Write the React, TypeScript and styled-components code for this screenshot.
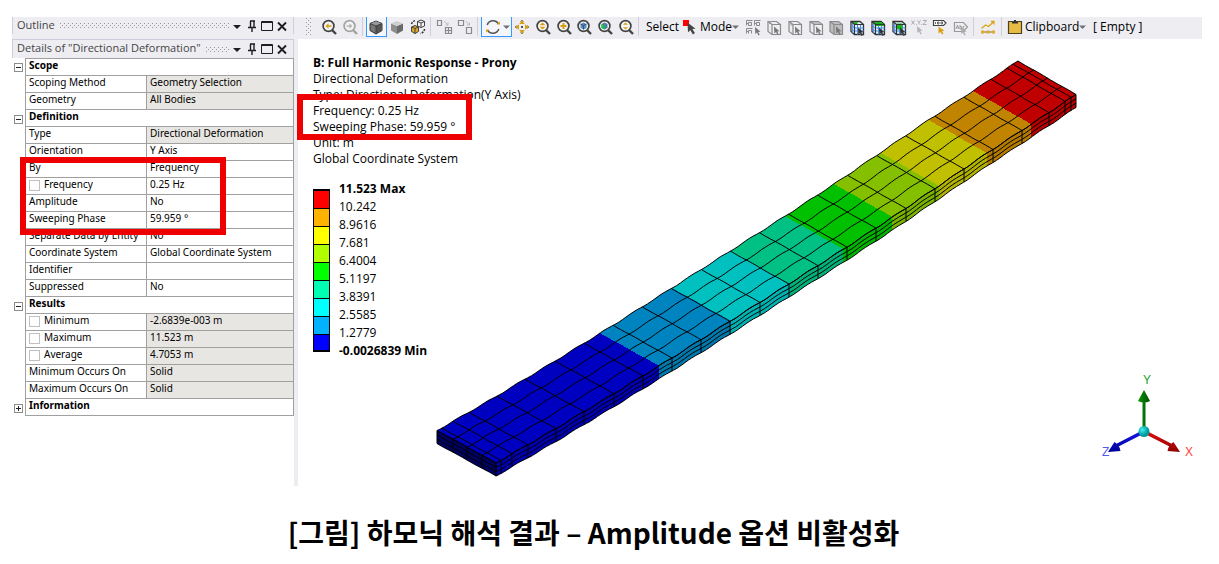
import React from "react";
import styled, { createGlobalStyle } from "styled-components";

const GlobalStyle = createGlobalStyle`
  * { box-sizing: border-box; }
  body {
    margin: 0;
    background: #ffffff;
    color: #000000;
    font-family: "Noto Sans", "Open Sans", sans-serif;
  }
  button { font: inherit; color: inherit; background: none; border: 0; padding: 0; }
`;

const chrome = "#eeeef2";
const line = "#a0a0a0";

const Page = styled.figure`
  margin: 0;
  padding: 17px 17px 12px 12px;
`;

const Workspace = styled.div`
  display: grid;
  grid-template-columns: 282px minmax(0, 1fr);
  column-gap: 4px;
  background: ${chrome};
`;

const Caption = styled.figcaption`
  padding: 28px 27px 0 0;
  text-align: center;
  font-family: "Noto Sans CJK KR", sans-serif;
  font-size: 28px;
  line-height: 36px;
  font-weight: 700;
`;

/* ---------- side panel ---------- */

const SidePanel = styled.aside`
  position: relative;
  background: #ffffff;
`;

const OutlineSlot = styled.div`
  padding-bottom: 5px;
  background: ${chrome};
`;

const PanelBar = styled.header<{ $topLine?: boolean }>`
  display: flex;
  align-items: center;
  height: ${(p) => (p.$topLine ? 19 : 17)}px;
  padding: 0 5px 0 4px;
  background: ${chrome};
  border: solid #cccedb;
  border-width: ${(p) => (p.$topLine ? "1px 1px 0" : "0 1px")};
`;

const PanelTitle = styled.h2`
  margin: 0 5px 2px 0;
  font-family: "Open Sans", sans-serif;
  font-size: 11px;
  line-height: 16px;
  font-weight: 400;
  color: #444444;
  white-space: nowrap;
`;

const DotsSvg = styled.svg`
  flex: 1;
  min-width: 0;
  height: 5px;
`;

const PanelActions = styled.div`
  display: flex;
  gap: 3px;
  margin-left: 2px;
`;

const PanelButton = styled.button`
  display: block;
  width: 12px;
  height: 14px;
  svg { display: block; }
`;

const PropertyTable = styled.table`
  width: 100%;
  table-layout: fixed;
  border-collapse: separate;
  border-spacing: 0;
  font-size: 10px;
  line-height: 12px;
`;

const Cell = styled.td<{ $muted?: boolean }>`
  height: 17px;
  padding: 0 0 4px 3px;
  text-align: left;
  font-weight: 400;
  white-space: nowrap;
  border: solid ${line};
  border-width: 0 1px 1px 0;
  background: ${(p) => (p.$muted ? "#e8e6e2" : "#ffffff")};
  tr:first-child > & { border-top-width: 1px; height: 18px; }
`;

const GroupCell = styled(Cell)`
  font-weight: 700;
`;

const GutterCell = styled.td`
  padding: 1px 0 0 2px;
  border-right: 1px solid ${line};
`;

const Toggle = styled.button`
  display: block;
  width: 9px;
  height: 9px;
  border: 1px solid #8c8c8c;
  background: #ffffff;
  svg { display: block; }
`;

const CheckLabel = styled.label`
  display: flex;
  align-items: center;
  height: 12px;
  gap: 4px;
`;

const Check = styled.input`
  appearance: none;
  width: 11px;
  height: 11px;
  margin: 3px 0 0;
  border: 1px solid #c0c0c0;
  background: #ffffff;
`;

const Highlight = styled.div<{ $x: number; $y: number; $w: number; $h: number }>`
  position: absolute;
  left: ${(p) => p.$x}px;
  top: ${(p) => p.$y}px;
  width: ${(p) => p.$w}px;
  height: ${(p) => p.$h}px;
  border: 6px solid #ee0000;
  pointer-events: none;
  z-index: 2;
`;

/* ---------- toolbar ---------- */

const Main = styled.main`
  background: #ffffff;
`;

const Toolbar = styled.div`
  display: flex;
  align-items: flex-start;
  height: 22px;
  padding-left: 8px;
  background: ${chrome};
  font-family: "Open Sans", sans-serif;
  font-size: 12px;
  line-height: 20px;
  white-space: nowrap;
`;

const GripSvg = styled.svg`
  width: 5px;
  height: 17px;
  margin: 1px 7px 0 0;
`;

const Group = styled.div<{ $width: number }>`
  display: flex;
  width: ${(p) => p.$width}px;
`;

const Tool = styled.button<{ $active?: boolean }>`
  flex: 1;
  display: flex;
  align-items: center;
  justify-content: center;
  min-width: 0;
  height: 20px;
  box-shadow: ${(p) => (p.$active ? "inset 1px 0 #3399ff, inset -1px -1px #3399ff" : "none")};
  background: ${(p) => (p.$active ? "#f5f6fa" : "transparent")};
  svg { display: block; flex: none; }
`;

const Separator = styled.span`
  width: 1px;
  height: 19px;
  margin: 0 3px 0 2px;
  background: #cccedb;
`;

const ToolText = styled.span`
  width: 38px;
  padding-left: 4px;
`;

const MenuButton = styled.button<{ $width: number }>`
  display: flex;
  align-items: center;
  width: ${(p) => p.$width}px;
  height: 20px;
`;

/* ---------- viewport ---------- */

const Viewport = styled.section`
  position: relative;
`;

const SceneSvg = styled.svg`
  display: block;
  width: 100%;
  height: auto;
`;

const Overlay = styled.div`
  position: absolute;
  left: 15px;
  top: 16px;
  font-family: "Open Sans", sans-serif;
  font-size: 12px;
  line-height: 16px;
  white-space: nowrap;
`;

const ResultTitle = styled.h1`
  margin: 0;
  font-size: 12px;
  line-height: 16px;
  font-weight: 700;
`;

const ResultLine = styled.p`
  margin: 0;
`;

const Legend = styled.div`
  display: flex;
  gap: 9px;
  margin-top: 13px;
`;

const LegendBar = styled.div`
  width: 17px;
  height: 163px;
  margin-top: 9px;
  border: solid #000000;
  border-width: 2px 1px;
`;

const Swatch = styled.div<{ $color: string }>`
  height: 18px;
  background: ${(p) => p.$color};
  border-bottom: 1px solid #000000;
  &:last-child { height: 15px; border-bottom: 0; }
`;

const LegendLabels = styled.ul`
  margin: 0;
  padding: 0;
  list-style: none;
  line-height: 18px;
`;

const LegendLabel = styled.li<{ $bold?: boolean }>`
  font-weight: ${(p) => (p.$bold ? 700 : 400)};
`;

const TriadSvg = styled.svg`
  position: absolute;
  right: 0;
  bottom: 20px;
  font-family: "Liberation Sans", sans-serif;
  font-size: 12px;
`;

/* ---------- icons ---------- */

const Svg = ({ children, w = 20, h = 20 }: { children: React.ReactNode; w?: number; h?: number }) => (
  <svg width={w} height={h} viewBox={`0 0 ${w} ${h}`} fill="none" aria-hidden="true">
    {children}
  </svg>
);

const DotPattern = ({ id }: { id: string }) => (
  <>
    <defs>
      <pattern id={id} width="4" height="4" patternUnits="userSpaceOnUse">
        <path d="M0 0h1v1H0zM2 2h1v1H2z" fill="#999999" shapeRendering="crispEdges" />
      </pattern>
    </defs>
    <rect width="100%" height="100%" fill={`url(#${id})`} />
  </>
);

const Lens = ({ color = "#444444", children }: { color?: string; children?: React.ReactNode }) => (
  <Svg>
    <circle cx="9.5" cy="9" r="5.4" stroke={color} strokeWidth="1.7" fill="#f4f4f4" />
    <path d="M13 13l4 4" stroke={color} strokeWidth="2.4" />
    {children}
  </Svg>
);

const gold = "#d8a010";

const SolidCube = ({ edge = "#333", top = "#999", left = "#777", right = "#555" }) => (
  <Svg>
    <path d="M10 4l6 2.5v7L10 17l-6-3.500v-7z" fill={left} stroke={edge} />
    <path d="M4.500 6.500L10 4.300l5.500 2.200L10 9z" fill={top} />
    <path d="M10 9l5.500-2.500v7L10 16.500z" fill={right} />
    <path d="M4 6.500L10 9l6-2.500M10 9v7.500" stroke={edge} strokeWidth=".8" />
  </Svg>
);

const cursor = "M0 0l5.500 4.800-2.300.2 1.500 2.800-1.200.600L2 5.500.3 7z";

const GreyBox = ({ fill = "none", face }: { fill?: string; face?: string }) => (
  <Svg>
    <path d="M4 4.500h8.500l4 3v10H8l-4-3z" fill={fill} stroke="#8a8a8a" strokeWidth="1.200" />
    {face && <path d={face} fill="#bcbcbc" />}
    <path d="M4 4.500l4 3h8.500M8 7.500v10" stroke="#8a8a8a" strokeWidth="1.200" />
    <g transform="translate(10 9.500)"><path d={cursor} fill="#777" /></g>
  </Svg>
);

const MeshBox = ({ green }: { green: string }) => (
  <Svg>
    <path d="M4 4.500h9l3.500 3v10H7.500L4 14.500z" fill="#e6f1ff" stroke="#333" strokeWidth="1.300" />
    <path d="M10.500 7.500v10M13.500 7.500v10M7.500 11h9M7.500 14h9M5.700 6v10M4 8l3.500 3M4 11.500l3.500 3" stroke="#4a90e8" />
    <path d={green} fill="#19b219" />
    <path d="M4 4.500l3.500 3h9M7.500 7.500v10" stroke="#333" strokeWidth="1.100" />
    <g transform="translate(11 10.500)"><path d={cursor} fill="#333" /></g>
  </Svg>
);

const Arrow = () => (
  <Svg w={7} h={20}><path d="M0 8.500h7L3.500 12z" fill="#717171" /></Svg>
);

const Icons = {
  previous: <Lens><path d="M6.500 9l3-2.800V8.200h3v1.600h-3v2z" fill={gold} /></Lens>,
  next: <Lens color="#a3a3a3"><path d="M12.500 9l-3-2.800V8.200h-3v1.600h3v2z" fill="#b5b5b5" /></Lens>,
  shadedEdges: <SolidCube />,
  shaded: (
    <Svg>
      <path d="M4 6.500l6 2.500v8l-6-3.500z" fill="#8e8e8e" />
      <path d="M16 6.500L10 9v8l6-3.500z" fill="#6a6a6a" />
      <path d="M4 6.500L10 4l6 2.500L10 9z" fill="#cfcfcf" />
    </Svg>
  ),
  bodies: (
    <Svg>
      <path d="M9.500 4.500l3.500-1.500 3.500 1.500v4.500L13 10.500 9.500 9z" fill="#f4f4f4" stroke="#444" />
      <path d="M9.500 4.500L13 6l3.500-1.500M13 6v4.500" stroke="#444" />
      <path d="M3.500 10l3.500-1.500 3.500 1.500v4.500L7 16.500l-3.500-2z" fill="#e0a92a" stroke="#444" />
      <path d="M3.500 10L7 11.500l3.500-1.500M7 11.500v5" stroke="#444" />
      <path d="M3.500 7a5 5 0 0 1 4-3.500M16.500 12a5 5 0 0 1-4 4.500" stroke="#333" strokeWidth="1.500" strokeDasharray="2 1" />
    </Svg>
  ),
  gridMesh: (
    <Svg>
      <path d="M3.500 3.500h4v5h-4zM11.500 10.500h6v6h-6zM14.500 10.500v6M11.500 13.500h6" stroke="#8a8a8a" strokeWidth="1.200" />
      <path d="M10 4l4 4M14 5.500V8h-2.500" stroke="#bbb" />
    </Svg>
  ),
  gridSingle: (
    <Svg>
      <path d="M3.500 3.500h5v5h-5zM11.500 10.500h5v6h-5z" stroke="#8a8a8a" strokeWidth="1.200" />
      <path d="M10.500 4l4 4M14.500 5.500V8H12" stroke="#bbb" />
    </Svg>
  ),
  rotate: (
    <Svg>
      <path d="M4.200 8a6.200 6.200 0 0 1 11.100-1.300M15.800 12a6.200 6.200 0 0 1-11.100 1.300" stroke="#555" strokeWidth="1.500" />
      <path d="M13.500 7.500h3.500v-3zM6.500 12.500H3v3z" fill={gold} />
    </Svg>
  ),
  pan: (
    <Svg>
      <path d="M10 3.500l2.800 3.500H7.200zM10 16.500L7.200 13h5.600zM3.500 10L7 7.200v5.600zM16.500 10L13 7.200v5.600z" fill={gold} />
      <path d="M9 9h2v2H9z" fill="#555" />
      <path d="M8.500 4.800L10 3l1.500 1.800M8.500 15.200L10 17l1.500-1.800M4.800 8.500L3 10l1.800 1.500M15.200 8.500L17 10l-1.800 1.500" stroke="#6b561c" strokeWidth=".7" />
    </Svg>
  ),
  zoom: <Lens><path d="M9.500 5.500l3 2.800h-6zM9.500 12.500l3-2.800h-6z" fill={gold} /></Lens>,
  zoomBox: <Lens><path d="M8.500 6h2v2h2v2h-2v2h-2v-2h-2V8h2z" fill={gold} /></Lens>,
  zoomFit: (
    <Lens>
      <path d="M9.500 5.500l3 1.500v4l-3 1.500-3-1.500V7z" fill="#5b8fc4" />
      <path d="M6.500 7l3 1.500 3-1.500M9.500 8.500v4" stroke="#27425e" strokeWidth=".8" />
    </Lens>
  ),
  zoomSelection: (
    <Lens>
      <path d="M9.500 5.500l3 1.500v4l-3 1.500-3-1.500V7z" fill="#4a80a8" />
      <path d="M6.500 7l3 1.500v4l-3-1.500z" fill="#17c83a" />
    </Lens>
  ),
  magnifier: <Lens><path d="M9.500 5.500l2.500 2.300H7zM9.500 12.500l2.500-2.300H7z" fill={gold} /></Lens>,
  selectMode: (
    <Svg>
      <path d="M3 3h6v6H3z" fill="#ff0000" />
      <path d="M7.500 5.500l8 6.200-3.200.4 2.600 4-2 1.300-2.500-4.200-2.400 2z" fill="#444" />
    </Svg>
  ),
  selectAll: (
    <Svg>
      <path d="M3.500 8.500v-5h6M11.500 8.500v-5h6M3.500 16.500v-5h6M5.500 8.500v-3h3v3zM13.500 8.500v-3h3v3zM5.500 16.500v-3h3v3M3 6.500h2M11 6.500h2M3 14.500h2" stroke="#8a8a8a" />
      <g transform="translate(12 10)"><path d={cursor} fill="#777" /></g>
    </Svg>
  ),
  vertex: <GreyBox face="M4 4.500h3v2.500H4z" />,
  edge: <GreyBox face="M4.500 5l3 2.500v2l-3-2z" />,
  face: <GreyBox face="M5 5h7.500l3 2.500H8z" />,
  body: <GreyBox fill="#bdbdbd" />,
  node: <MeshBox green="M5.500 5h5v2.500h-3z" />,
  elementFace: <MeshBox green="M4.500 5h8.500l3 2.500v1.500H8z" />,
  element: <MeshBox green="M8 6.500h5.500v6H8z" />,
  xyz: (
    <Svg>
      <path d="M2.500 3.500l3 4M5.500 3.500l-3 4M8.500 3.500L10 5.500l1.500-2M10 5.500v2M14 3.500h3.500L14 7.500h3.500M7 7.500h.8M12 7.500h.8" stroke="#a5a5a5" strokeWidth=".9" />
      <g transform="translate(8 9)"><path d={cursor} fill="#b5b5b5" /></g>
    </Svg>
  ),
  tag: (
    <Svg>
      <path d="M3.500 3.500h10l2.500 2.500-2.500 2.500h-10z" fill="#fff" stroke="#444" strokeWidth="1.200" />
      <path d="M5.500 5v2M7.500 5h1.500v2H7.500zM11 5h1.500v2H11z" stroke="#444" strokeWidth=".8" />
      <path d="M8.500 9.500l6 4.200-2.600.5 1.600 2.600-1.200.7-1.900-2.600-1.900 1.500z" fill={gold} />
    </Svg>
  ),
  label: (
    <Svg>
      <path d="M3.500 5.500h9l4 4.500-4 4.500h-9z" stroke="#9a9a9a" strokeWidth="1.200" />
      <path d="M5 12l1.500-4L8 12M5.500 10.800h2M9 8v4h1.500v-2.500H9M13.500 9.500H12V12h1.500" stroke="#9a9a9a" strokeWidth=".9" />
      <g transform="translate(10 10)"><path d={cursor} fill="#aaa" /></g>
    </Svg>
  ),
  chart: (
    <Svg>
      <path d="M3.500 11.500l4-3.500 3 1.500 5.500-5M13 4.500h3v3" stroke="#dba514" strokeWidth="1.300" />
      <path d="M3 15h14" stroke="#8a6d1a" />
      <path d="M3 13.500h3v3H3zM8.500 13.500h3v3h-3zM14 13.500h3v3h-3z" fill="#e0a92a" />
    </Svg>
  ),
  clipboard: (
    <Svg>
      <path d="M3.500 4.500h13v12h-13z" fill="#e8bb45" stroke="#4b4222" strokeWidth="1.200" />
      <path d="M7 5h6v1.500H7zM9 3h2v2H9z" fill="#333" />
    </Svg>
  ),
};

type IconName = keyof typeof Icons;

const ToolGroup = ({ width, names, active }: { width: number; names: IconName[]; active?: IconName }) => (
  <Group $width={width}>
    {names.map((n) => (
      <Tool key={n} type="button" aria-label={n} $active={n === active}>
        {Icons[n]}
      </Tool>
    ))}
  </Group>
);

const PanelHeader = ({ id, title, topLine }: { id: string; title: string; topLine?: boolean }) => (
  <PanelBar $topLine={topLine}>
    <PanelTitle>{title}</PanelTitle>
    <DotsSvg aria-hidden="true"><DotPattern id={id} /></DotsSvg>
    <PanelActions>
      <PanelButton type="button" aria-label="Menu">
        <Svg w={12} h={14}><path d="M2 6h8l-4 4z" fill="#1e1e1e" /></Svg>
      </PanelButton>
      <PanelButton type="button" aria-label="Pin">
        <Svg w={12} h={14}><path d="M4 2h5M4.500 2v6M8 2v6M2 8.500h8M6 9v4" stroke="#1e1e1e" strokeWidth="1.400" /></Svg>
      </PanelButton>
      <PanelButton type="button" aria-label="Maximize">
        <Svg w={12} h={14}><path d="M.5 2.500h11v9H.5zM0 3.500h12" stroke="#1e1e1e" /></Svg>
      </PanelButton>
      <PanelButton type="button" aria-label="Close">
        <Svg w={12} h={14}><path d="M2 3.500l8 8M10 3.500l-8 8" stroke="#1e1e1e" strokeWidth="1.800" /></Svg>
      </PanelButton>
    </PanelActions>
  </PanelBar>
);

/* ---------- property data ---------- */

type Property = { name: string; value: string; muted?: boolean; check?: boolean };
type Section = { title: string; open: boolean; rows: Property[] };

const sections: Section[] = [
  {
    title: "Scope",
    open: true,
    rows: [
      { name: "Scoping Method", value: "Geometry Selection", muted: true },
      { name: "Geometry", value: "All Bodies", muted: true },
    ],
  },
  {
    title: "Definition",
    open: true,
    rows: [
      { name: "Type", value: "Directional Deformation", muted: true },
      { name: "Orientation", value: "Y Axis" },
      { name: "By", value: "Frequency" },
      { name: "Frequency", value: "0.25 Hz", check: true },
      { name: "Amplitude", value: "No" },
      { name: "Sweeping Phase", value: "59.959 °" },
      { name: "Separate Data by Entity", value: "No" },
      { name: "Coordinate System", value: "Global Coordinate System" },
      { name: "Identifier", value: "" },
      { name: "Suppressed", value: "No" },
    ],
  },
  {
    title: "Results",
    open: true,
    rows: [
      { name: "Minimum", value: "-2.6839e-003 m", muted: true, check: true },
      { name: "Maximum", value: "11.523 m", muted: true, check: true },
      { name: "Average", value: "4.7053 m", muted: true, check: true },
      { name: "Minimum Occurs On", value: "Solid", muted: true },
      { name: "Maximum Occurs On", value: "Solid", muted: true },
    ],
  },
  { title: "Information", open: false, rows: [] },
];

const Properties = () => (
  <PropertyTable>
    <colgroup>
      <col width={14} />
      <col width={121} />
      <col />
    </colgroup>
    <tbody>
      {sections.map((s) => (
        <React.Fragment key={s.title}>
          <tr>
            <GutterCell>
              <Toggle type="button" aria-label={s.title} aria-expanded={s.open}>
                <Svg w={7} h={7}><path d={s.open ? "M1 3.500h5" : "M1 3.500h5M3.500 1v5"} stroke="#222" /></Svg>
              </Toggle>
            </GutterCell>
            <GroupCell as="th" colSpan={2}>{s.title}</GroupCell>
          </tr>
          {s.rows.map((r) => (
            <tr key={r.name}>
              <GutterCell />
              <Cell as="th" scope="row">
                {r.check ? (
                  <CheckLabel>
                    <Check type="checkbox" />
                    {r.name}
                  </CheckLabel>
                ) : (
                  r.name
                )}
              </Cell>
              <Cell $muted={r.muted}>{r.value}</Cell>
            </tr>
          ))}
        </React.Fragment>
      ))}
    </tbody>
  </PropertyTable>
);

/* ---------- deformed beam ---------- */

const sag: [number, number][] = [
  [0, 0], [0.1, 3.500], [0.2, 5.500], [0.3, 6.700], [0.5, 7], [0.6, 7],
  [0.69, 6], [0.77, 4], [0.85, 2], [0.93, 1.200], [1, 0],
];

const sagAt = (t: number) => {
  for (let i = 1; i < sag.length; i++) {
    const [a, va] = sag[i - 1];
    const [b, vb] = sag[i];
    if (t <= b) return va + ((vb - va) * (t - a)) / (b - a);
  }
  return 0;
};

// t runs along the beam, s across its width, z down through its thickness.
const project = (t: number, s: number, z: number) => {
  const x = 139 + 59 * s + (581 - s) * t;
  const ripple = 0.5 * Math.sin(t * Math.PI * 40) + 0.200 * Math.sin(s * Math.PI * 4);
  const y = 391.5 + 32.500 * s - (369.5 - s) * t + sagAt(t) + 13 * z + ripple;
  return `${x.toFixed(1)} ${y.toFixed(1)}`;
};

const steps = (a: number, b: number, n: number) =>
  Array.from({ length: n + 1 }, (_, i) => a + ((b - a) * i) / n);

const along = (a: number, b: number, s: number, z: number) =>
  steps(a, b, Math.max(2, Math.ceil(Math.abs(b - a) * 160))).map((t) => project(t, s, z));
const across = (a: number, b: number, t: number, z: number) =>
  steps(a, b, 16).map((s) => project(t, s, z));
const poly = (pts: string[]) => "M" + pts.join("L");

const bands = [
  { to: 0.2805, top: "#0000c0", side: "#0000b0" },
  { to: 0.405, top: "#0084c0", side: "#0078ac" },
  { to: 0.506, top: "#00c0c0", side: "#00b2b2" },
  { to: 0.599, top: "#00c084", side: "#00b27a" },
  { to: 0.683, top: "#00c000", side: "#00b400" },
  { to: 0.764, top: "#84c000", side: "#7ab200" },
  { to: 0.846, top: "#c0c000", side: "#b2b200" },
  { to: 0.923, top: "#c08400", side: "#b47a00" },
  { to: 1, top: "#c00000", side: "#b40000" },
];

const stations = [
  0, 5, 16, 32, 60, 88, 118, 147, 176, 205, 234, 264, 293, 322, 351, 380, 410, 439,
  468, 497, 526, 553, 569, 575, 580,
].map((x) => x / 580);

const rows = [0, 0.27, 0.51, 0.76, 1];
const layers = [0, 0.34, 0.67, 1];

const Beam = () => (
  <g>
    <g shapeRendering="crispEdges">
      {bands.map((b, i) => {
        const from = i ? bands[i - 1].to : 0;
        return (
          <g key={b.top}>
            <path d={poly([...along(from, b.to, 0, 0), ...across(0, 1, b.to, 0), ...along(b.to, from, 1, 0), ...across(1, 0, from, 0)])} fill={b.top} />
            <path d={poly([...along(from, b.to, 1, 0), ...along(b.to, from, 1, 1)])} fill={b.side} />
          </g>
        );
      })}
      <path d={poly([...across(0, 1, 0, 0), ...across(1, 0, 0, 1)])} fill="#000060" />
    </g>
    <g stroke="#000000" fill="none">
      {rows.map((s) => <path key={s} d={poly(along(0, 1, s, 0))} />)}
      {layers.map((z) => <path key={z} d={poly(along(0, 1, 1, z))} />)}
      {layers.map((z) => <path key={z} d={poly(across(0, 1, 0, z))} />)}
      {rows.map((s) => <path key={s} d={poly([project(0, s, 0), project(0, s, 1)])} />)}
      {stations.map((t) => (
        <path key={t} d={poly([...across(0, 1, t, 0), project(t, 1, 1)])} />
      ))}
    </g>
  </g>
);

const Triad = () => (
  <TriadSvg width="110" height="100" viewBox="0 0 110 100" role="img" aria-label="Coordinate axes">
    <defs>
      <linearGradient id="axisY"><stop stopColor="#0a9a0a" /><stop offset="1" stopColor="#004c00" /></linearGradient>
      <linearGradient id="axisX" x2="0" y2="1"><stop stopColor="#e01010" /><stop offset="1" stopColor="#900000" /></linearGradient>
      <linearGradient id="axisZ" x2="0" y2="1"><stop stopColor="#1818e8" /><stop offset="1" stopColor="#000098" /></linearGradient>
      <radialGradient id="origin" cx=".35" cy=".35"><stop stopColor="#40f0f0" /><stop offset="1" stopColor="#009c9c" /></radialGradient>
    </defs>
    <path d="M50.500 32h3v33h-3zM52 24l6 11q-6 3-12 0z" fill="url(#axisY)" />
    <path d="M53 64l27 14-1.500 3L51 67zM88 86l-12.500-1q1-6 6-9z" fill="url(#axisX)" />
    <path d="M51 64L24 78l1.500 3L53 67zM16 86l12.500-1q-1-6-6-9z" fill="url(#axisZ)" />
    <circle cx="52" cy="65.500" r="5.500" fill="url(#origin)" />
    <text x="51" y="18" fill="#22a022">Y</text>
    <text x="93" y="90" fill="#ff4040">X</text>
    <text x="10" y="90" fill="#5858f0">Z</text>
  </TriadSvg>
);

const legendColors = [
  "#ff0000", "#ffb200", "#ffff00", "#b2ff00", "#00ff00", "#00ffb2", "#00ffff", "#00b2ff", "#0000ff",
];
const legendLabels = [
  "11.523 Max", "10.242", "8.9616", "7.681", "6.4004", "5.1197", "3.8391", "2.5585", "1.2779", "-0.0026839 Min",
];
const resultLines = [
  "Directional Deformation",
  "Type: Directional Deformation(Y Axis)",
  "Frequency: 0.25 Hz",
  "Sweeping Phase: 59.959 °",
  "Unit: m",
  "Global Coordinate System",
];

export default function App() {
  return (
    <Page>
      <GlobalStyle />
      <Workspace>
        <SidePanel>
          <OutlineSlot>
            <PanelHeader id="outlineDots" title="Outline" />
          </OutlineSlot>
          <PanelHeader id="detailDots" title={'Details of "Directional Deformation"'} topLine />
          <Properties />
          <Highlight $x={8} $y={140} $w={206} $h={78} />
        </SidePanel>
        <Main>
          <Toolbar role="toolbar">
            <GripSvg aria-hidden="true"><DotPattern id="gripDots" /></GripSvg>
            <ToolGroup width={42} names={["previous", "next"]} />
            <Separator />
            <ToolGroup width={62} names={["shadedEdges", "shaded", "bodies"]} active="shadedEdges" />
            <Separator />
            <ToolGroup width={41} names={["gridMesh", "gridSingle"]} />
            <Separator />
            <Group $width={31}>
              <Tool type="button" aria-label="Rotate" $active>
                {Icons.rotate}
                <Arrow />
              </Tool>
            </Group>
            <ToolGroup width={124} names={["pan", "zoom", "zoomBox", "zoomFit", "zoomSelection", "magnifier"]} />
            <Separator />
            <ToolText>Select</ToolText>
            <MenuButton type="button" $width={63}>
              {Icons.selectMode}
              Mode
              <Arrow />
            </MenuButton>
            <ToolGroup
              width={228}
              names={["selectAll", "vertex", "edge", "face", "body", "node", "elementFace", "element", "xyz", "tag", "label"]}
            />
            <Separator />
            <ToolGroup width={22} names={["chart"]} />
            <Separator />
            <MenuButton type="button" $width={84}>
              {Icons.clipboard}
              Clipboard
              <Arrow />
            </MenuButton>
            <ToolText>[ Empty ]</ToolText>
          </Toolbar>
          <Viewport>
            <SceneSvg viewBox="0 0 904 447" role="img" aria-label="Deformed beam">
              <Beam />
            </SceneSvg>
            <Overlay>
              <ResultTitle>B: Full Harmonic Response - Prony</ResultTitle>
              {resultLines.map((t) => (
                <ResultLine key={t}>{t}</ResultLine>
              ))}
              <Legend>
                <LegendBar>
                  {legendColors.map((c) => (
                    <Swatch key={c} $color={c} />
                  ))}
                </LegendBar>
                <LegendLabels>
                  {legendLabels.map((t, i) => (
                    <LegendLabel key={t} $bold={i === 0 || i === legendLabels.length - 1}>
                      {t}
                    </LegendLabel>
                  ))}
                </LegendLabels>
              </Legend>
            </Overlay>
            <Triad />
            <Highlight $x={-1} $y={55} $w={175} $h={46} />
          </Viewport>
        </Main>
      </Workspace>
      <Caption>[그림] 하모닉 해석 결과 – Amplitude 옵션 비활성화</Caption>
    </Page>
  );
}
